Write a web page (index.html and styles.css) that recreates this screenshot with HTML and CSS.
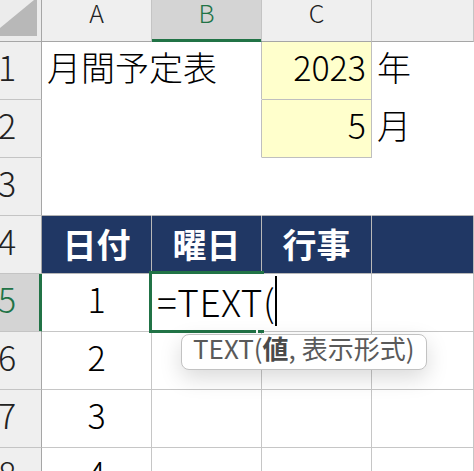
FILE: index.html
```html
<!DOCTYPE html>
<html lang="ja">
<head>
<meta charset="utf-8">
<title>月間予定表</title>
<link rel="stylesheet" href="styles.css">
</head>
<body>
<div class="sheet">
  <div class="row hdr">
    <div class="corner"><svg width="41" height="41" viewBox="0 0 41 41"><polygon points="34,0 37,0 37,36 0,36 0,28" fill="#b8b8b8"/></svg></div>
    <div class="ch">A</div>
    <div class="ch sel">B</div>
    <div class="ch">C</div>
    <div class="ch"></div>
  </div>
  <div class="row plain">
    <div class="rh">1</div>
    <div class="c">月間予定表</div>
    <div class="c edge"></div>
    <div class="c yel num">2023</div>
    <div class="c">年</div>
  </div>
  <div class="row plain">
    <div class="rh">2</div>
    <div class="c"></div>
    <div class="c edge"></div>
    <div class="c yel num">5</div>
    <div class="c">月</div>
  </div>
  <div class="row plain last">
    <div class="rh">3</div>
    <div class="c"></div>
    <div class="c"></div>
    <div class="c"></div>
    <div class="c"></div>
  </div>
  <div class="row head">
    <div class="rh">4</div>
    <div class="c">日付</div>
    <div class="c">曜日</div>
    <div class="c">行事</div>
    <div class="c"></div>
  </div>
  <div class="row body">
    <div class="rh active">5</div>
    <div class="c ctr">1</div>
    <div class="c editing"><span class="edit">=TEXT(<span class="caret"></span></span><div class="selbox"></div></div>
    <div class="c"></div>
    <div class="c"></div>
  </div>
  <div class="row body">
    <div class="rh">6</div>
    <div class="c ctr">2</div>
    <div class="c"></div>
    <div class="c"></div>
    <div class="c"></div>
  </div>
  <div class="row body">
    <div class="rh">7</div>
    <div class="c ctr">3</div>
    <div class="c"></div>
    <div class="c"></div>
    <div class="c"></div>
  </div>
  <div class="row body">
    <div class="rh">8</div>
    <div class="c ctr">4</div>
    <div class="c"></div>
    <div class="c"></div>
    <div class="c"></div>
  </div>
  <div class="tip">TEXT(<b>値</b>, 表示形式)</div>
</div>
</body>
</html>
```
FILE: styles.css
```css
html, body {
  margin: 0;
  padding: 0;
  overflow: hidden;
  background: #fff;
}
body {
  font-family: "Noto Sans CJK JP", "Noto Sans", sans-serif;
  font-weight: 300;
  color: #000;
}
.sheet {
  position: relative;
  width: 474px;
  height: 471px;
  overflow: hidden;
}
.row {
  display: grid;
  grid-template-columns: 42px 110px 110px 110px 1fr;
  height: 58px;
}
.row > div {
  box-sizing: border-box;
  border-right: 1px solid transparent;
  border-bottom: 1px solid transparent;
  display: flex;
  align-items: center;
  padding: 0 5px 8px;
  white-space: nowrap;
  font-size: 34px;
  min-width: 0;
}

/* column header row */
.hdr { height: 42px; }
.hdr > div {
  background: #efefef;
  border-right-color: #c4c4c4;
  border-bottom-color: #a6a6a6;
  font-size: 25px;
  line-height: 25px;
  align-items: flex-start;
  justify-content: center;
  padding: 0;
  color: #222;
}
.hdr > .corner {
  background: #ececec;
  border-right-color: #a6a6a6;
  align-items: stretch;
  justify-content: flex-start;
}
.hdr > .sel {
  background: #d4d4d4;
  color: #217346;
  border-bottom-color: #217346;
  box-shadow: inset 0 -2px 0 #217346;
}

/* top area without gridlines */
.plain .edge { border-right-color: #bfbfbf; }
.plain .yel {
  background: #ffffcc;
  border-right-color: #bfbfbf;
  border-bottom-color: #bfbfbf;
}
.num { justify-content: flex-end; }
.last > div { border-bottom-color: #b4b4b4; }

/* table header */
.head > div {
  background: #203764;
  color: #fff;
  font-weight: 700;
  justify-content: center;
  border-right-color: #b8b8b8;
  border-bottom-color: #b8b8b8;
  padding-bottom: 3px;
}

/* table body */
.body > div {
  border-right-color: #c6c6c6;
  border-bottom-color: #c6c6c6;
}
.ctr { justify-content: center; }

/* row headers */
.row > div.rh {
  background: #efefef;
  color: #222;
  font-weight: 300;
  border-right-color: #a6a6a6;
  border-bottom-color: #c4c4c4;
  justify-content: flex-start;
  padding: 0 0 8px 0;
  text-indent: -2px;
}
.row > div.rh.active {
  background: #d4d4d4;
  color: #217346;
  border-right-color: #217346;
  box-shadow: inset -2px 0 0 #217346;
}

/* cell being edited */
.body > div.editing {
  position: relative;
  align-items: flex-start;
  padding: 0 0 0 5px;
  border-right-color: transparent;
}
.edit {
  font-size: 37px;
  line-height: normal;
  letter-spacing: 0.5px;
  color: #000;
}
.caret {
  display: inline-block;
  width: 1.5px;
  height: 50px;
  margin-left: 0;
  background: #000;
  vertical-align: -9px;
}
.selbox {
  position: absolute;
  left: -3px;
  top: -3px;
  width: 115px;
  height: 62px;
  box-sizing: border-box;
  border: 3px solid #217346;
  border-right: 0;
  pointer-events: none;
}
.selbox::after {
  content: "";
  position: absolute;
  left: 104px;
  bottom: -3px;
  width: 2px;
  height: 3px;
  background: #fff;
}

/* function tooltip */
.tip {
  position: absolute;
  left: 181px;
  top: 334px;
  width: 246px;
  height: 36px;
  box-sizing: border-box;
  border: 1.5px solid #c2c2c2;
  border-radius: 8px;
  background: #fff;
  box-shadow: 0 8px 22px rgba(0, 0, 0, 0.15);
  font-size: 26px;
  line-height: 26px;
  padding: 0 0 0 11px;
  color: #5a5a5a;
  font-weight: 400;
  white-space: nowrap;
}
.tip b {
  font-weight: 700;
  color: #4a4a4a;
}
```
